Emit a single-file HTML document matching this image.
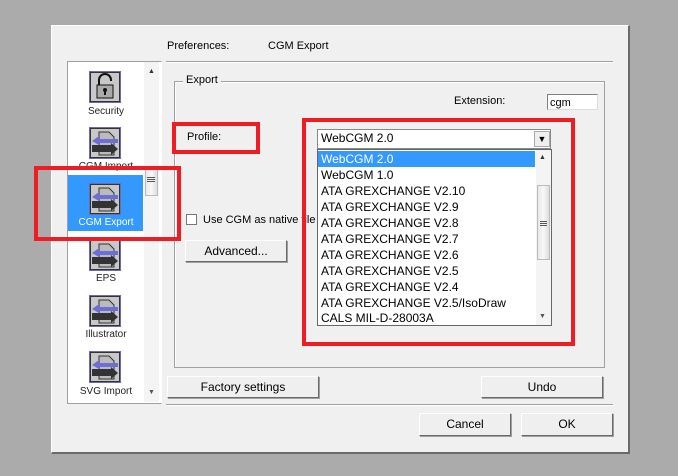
<!DOCTYPE html>
<html><head><style>
body{margin:0;width:678px;height:476px;background:#ababab;position:relative;overflow:hidden;font-family:"Liberation Sans",sans-serif;font-size:12px;color:#000}
.a{position:absolute}
.dlg{left:51px;top:25px;width:576px;height:426px;background:#f0f0f0;border-right:2px solid #6a6a6a;border-bottom:2px solid #6a6a6a;border-left:1px solid #fff;border-top:1px solid #fff}
.btn{position:absolute;background:#efefef;border:1px solid #fff;border-right-color:#6a6a6a;border-bottom-color:#6a6a6a;box-shadow:1px 1px 0 #a0a0a0;text-align:center;font-size:12px;box-sizing:border-box}
.red{position:absolute;border:4px solid #ee1c25;box-sizing:border-box}
.lab{position:absolute;width:76px;text-align:center;font-size:10px;color:#222}
.item{position:absolute;left:3px;height:16px;line-height:16px;font-size:12px;color:#000}
</style></head><body>
<div class="a dlg"></div>
<div class="a" style="left:167px;top:40px;font-size:11px">Preferences:</div>
<div class="a" style="left:268px;top:40px;font-size:11px">CGM Export</div>
<div class="a" style="left:166px;top:61px;width:447px;height:1px;background:#a0a0a0;border-bottom:1px solid #fff"></div>
<div class="a" style="left:67px;top:61px;width:93px;height:341px;background:#fff;border:1px solid #a0a0a0;border-right-color:#fff"></div>
<div class="a" style="left:144px;top:62px;width:15px;height:340px;background:#f4f4f4"></div>
<div class="a" style="left:145px;top:166px;width:13px;height:30px;background:linear-gradient(90deg,#e8e8e8,#f8f8f8,#ddd);border:1px solid #bbb;box-sizing:border-box"></div>
<div class="a" style="left:147px;top:177px;width:8px;height:1px;background:#555;box-shadow:0 2px 0 #555,0 4px 0 #555"></div>
<div class="a" style="left:148px;top:68px;font-size:7px;color:#333">▲</div>
<div class="a" style="left:148px;top:389px;font-size:7px;color:#555">▼</div>
<div class="a" style="left:68px;top:175px;width:75px;height:56px;background:#3399ff"></div>
<svg class="a" style="left:89px;top:71px" width="32" height="32"><rect x=".5" y=".5" width="31" height="31" fill="#c8c8c8" stroke="#6b6bb0"/><rect x="1.5" y="1.5" width="29" height="29" fill="none" stroke="#333"/><path d="M10 14V9a6 6 0 0 1 12 0v1" fill="none" stroke="#111" stroke-width="2"/><rect x="8" y="14" width="16" height="13" fill="#aaa" stroke="#111"/><circle cx="16" cy="19" r="2" fill="#111"/><rect x="15" y="19" width="2" height="5" fill="#111"/></svg>
<div class="lab" style="left:68px;top:106px">Security</div>
<svg width="0" height="0" style="position:absolute"><defs><g id="ic"><rect x=".5" y=".5" width="31" height="31" fill="#c8c8c8" stroke="#6b6bb0"/><rect x="1.5" y="1.5" width="29" height="29" fill="none" stroke="#333"/><path d="M10 5h10l5 5v18H10z" fill="#bbb" stroke="#333"/><path d="M3 14l7-5v3h19v4H10v2z" fill="#6e6ed8"/><path d="M3 18h19v-2l7 6-7 6v-3H3z" fill="#333"/></g></defs></svg>
<svg class="a" style="left:89px;top:127px" width="32" height="32"><use href="#ic"/></svg>
<div class="lab" style="left:68px;top:161px">CGM Import</div>
<svg class="a" style="left:89px;top:183px" width="32" height="32"><use href="#ic"/></svg>
<div class="lab" style="left:68px;top:217px;color:#fff">CGM Export</div>
<svg class="a" style="left:89px;top:239px" width="32" height="32"><use href="#ic"/></svg>
<div class="lab" style="left:68px;top:273px">EPS</div>
<svg class="a" style="left:89px;top:295px" width="32" height="32"><use href="#ic"/></svg>
<div class="lab" style="left:68px;top:329px">Illustrator</div>
<svg class="a" style="left:89px;top:351px" width="32" height="32"><use href="#ic"/></svg>
<div class="lab" style="left:68px;top:386px">SVG Import</div>
<div class="a" style="left:174px;top:81px;width:429px;height:285px;border:1px solid #a0a0a0;box-shadow:1px 1px 0 #fff inset"></div>
<div class="a" style="left:183px;top:74px;padding:0 3px;background:#f0f0f0;font-size:11px">Export</div>
<div class="a" style="left:454px;top:95px;font-size:11px">Extension:</div>
<div class="a" style="left:547px;top:94px;width:51px;height:16px;background:#fff;border:1px solid #808080;border-right-color:#ddd;border-bottom-color:#ddd;box-sizing:border-box;font-size:11px;padding:2px 0 0 2px">cgm</div>
<div class="a" style="left:187px;top:131px;font-size:11px">Profile:</div>
<div class="a" style="left:186px;top:214px;width:11px;height:11px;background:#fff;border:1px solid #777;box-sizing:border-box"></div>
<div class="a" style="left:203px;top:214px;font-size:11px">Use CGM as native file f</div>
<div class="btn" style="left:185px;top:240px;width:102px;height:22px;line-height:20px">Advanced...</div>
<div class="a" style="left:317px;top:129px;width:234px;height:20px;background:#fff;border:1px solid #888;box-sizing:border-box"></div>
<div class="a" style="left:321px;top:131px;font-size:12px">WebCGM 2.0</div>
<div class="a" style="left:534px;top:131px;width:16px;height:16px;background:#eee;border:1px solid #aaa;box-sizing:border-box;font-size:9px;text-align:center;line-height:15px">▼</div>
<div class="a" style="left:317px;top:149px;width:235px;height:177px;background:#fff;border:1px solid #666;box-sizing:border-box">
<div class="a" style="left:0;top:1px;width:217px;height:16px;background:#3399ff"></div>
<div class="item" style="top:1px;color:#fff">WebCGM 2.0</div>
<div class="item" style="top:17px">WebCGM 1.0</div>
<div class="item" style="top:33px">ATA GREXCHANGE V2.10</div>
<div class="item" style="top:49px">ATA GREXCHANGE V2.9</div>
<div class="item" style="top:65px">ATA GREXCHANGE V2.8</div>
<div class="item" style="top:81px">ATA GREXCHANGE V2.7</div>
<div class="item" style="top:97px">ATA GREXCHANGE V2.6</div>
<div class="item" style="top:113px">ATA GREXCHANGE V2.5</div>
<div class="item" style="top:129px">ATA GREXCHANGE V2.4</div>
<div class="item" style="top:145px">ATA GREXCHANGE V2.5/IsoDraw</div>
<div class="item" style="top:161px;height:14px;line-height:14px">CALS MIL-D-28003A</div>
<div class="a" style="left:218px;top:0;width:15px;height:175px;background:#f4f4f4"></div>
<div class="a" style="left:219px;top:35px;width:13px;height:75px;background:linear-gradient(90deg,#e8e8e8,#f8f8f8,#ddd);border:1px solid #bbb;box-sizing:border-box"></div>
<div class="a" style="left:222px;top:71px;width:7px;height:1px;background:#555;box-shadow:0 2px 0 #555,0 4px 0 #555"></div>
<div class="a" style="left:221px;top:4px;font-size:7px;color:#333">▲</div>
<div class="a" style="left:221px;top:163px;font-size:7px;color:#555">▼</div>
</div>
<div class="btn" style="left:167px;top:376px;width:152px;height:22px;line-height:20px">Factory settings</div>
<div class="btn" style="left:481px;top:376px;width:122px;height:22px;line-height:20px">Undo</div>
<div class="a" style="left:166px;top:404px;width:447px;height:1px;background:#a0a0a0;border-bottom:1px solid #fff"></div>
<div class="btn" style="left:419px;top:413px;width:92px;height:23px;line-height:21px">Cancel</div>
<div class="btn" style="left:521px;top:413px;width:92px;height:23px;line-height:21px">OK</div>
<div class="red" style="left:172px;top:122px;width:88px;height:32px"></div>
<div class="red" style="left:302px;top:118px;width:273px;height:228px"></div>
<div class="red" style="left:34px;top:166px;width:147px;height:75px"></div>
</body></html>
